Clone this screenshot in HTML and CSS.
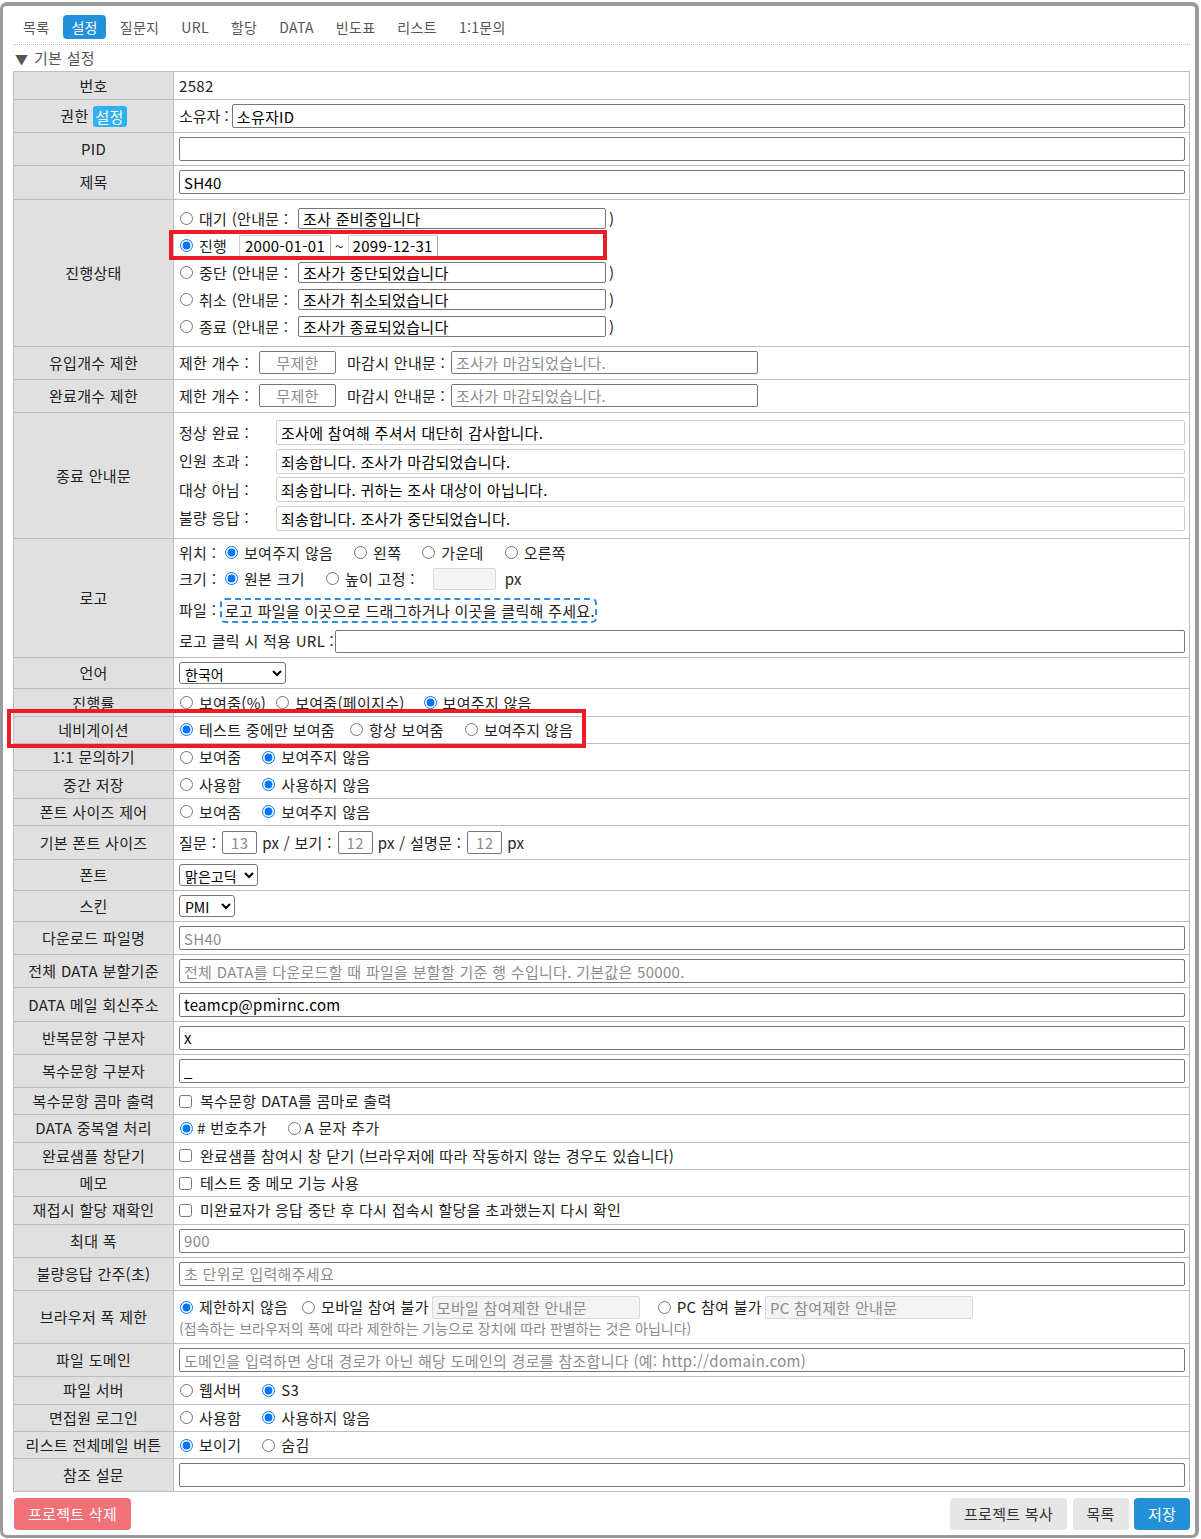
FILE: index.html
```html
<!DOCTYPE html>
<html lang="ko">
<head>
<meta charset="utf-8">
<title>설정</title>
<link rel="stylesheet" href="styles.css">
</head>
<body>
<div class="frame">
  <nav class="tabs">
    <a class="tab" href="#">목록</a>
    <a class="tab active" href="#">설정</a>
    <a class="tab" href="#">질문지</a>
    <a class="tab" href="#">URL</a>
    <a class="tab" href="#">할당</a>
    <a class="tab" href="#">DATA</a>
    <a class="tab" href="#">빈도표</a>
    <a class="tab" href="#">리스트</a>
    <a class="tab" href="#">1:1문의</a>
  </nav>
  <div class="section-title"><span class="tri">▼</span>기본 설정</div>

  <div class="sheet">
    <div class="row r-num"><div class="th">번호</div><div class="td">2582</div></div>
    <div class="row in"><div class="th">권한 <span class="badge">설정</span></div><div class="td"><span class="owner-label">소유자 :</span><input class="inp full owner" value="소유자ID"></div></div>
    <div class="row in"><div class="th">PID</div><div class="td"><input class="inp full"></div></div>
    <div class="row in"><div class="th">제목</div><div class="td"><input class="inp full" value="SH40"></div></div>

    <div class="row r-status"><div class="th">진행상태</div><div class="td col status-list">
      <div class="st-line"><label class="st-lab"><input type="radio" name="st">대기 (안내문 :</label><input class="inp st-msg" value="조사 준비중입니다"><span class="paren">)</span></div>
      <div class="st-line"><label class="st-lab st-short"><input type="radio" name="st" checked>진행</label><input class="date" value="2000-01-01"><span class="tilde">~</span><input class="date d2" value="2099-12-31"></div>
      <div class="st-line"><label class="st-lab"><input type="radio" name="st">중단 (안내문 :</label><input class="inp st-msg" value="조사가 중단되었습니다"><span class="paren">)</span></div>
      <div class="st-line"><label class="st-lab"><input type="radio" name="st">취소 (안내문 :</label><input class="inp st-msg" value="조사가 취소되었습니다"><span class="paren">)</span></div>
      <div class="st-line"><label class="st-lab"><input type="radio" name="st">종료 (안내문 :</label><input class="inp st-msg" value="조사가 종료되었습니다"><span class="paren">)</span></div>
    </div></div>

    <div class="row in"><div class="th">유입개수 제한</div><div class="td"><span class="lim-label">제한 개수 :</span><input class="inp lim" placeholder="무제한"><span class="close-label">마감시 안내문 :</span><input class="inp lim-msg" placeholder="조사가 마감되었습니다."></div></div>
    <div class="row in"><div class="th">완료개수 제한</div><div class="td"><span class="lim-label">제한 개수 :</span><input class="inp lim" placeholder="무제한"><span class="close-label">마감시 안내문 :</span><input class="inp lim-msg" placeholder="조사가 마감되었습니다."></div></div>

    <div class="row r-end"><div class="th">종료 안내문</div><div class="td col end-list">
      <div class="end-line"><span class="end-label">정상 완료 :</span><input class="inp end-inp" value="조사에 참여해 주셔서 대단히 감사합니다."></div>
      <div class="end-line"><span class="end-label">인원 초과 :</span><input class="inp end-inp" value="죄송합니다. 조사가 마감되었습니다."></div>
      <div class="end-line"><span class="end-label">대상 아님 :</span><input class="inp end-inp" value="죄송합니다. 귀하는 조사 대상이 아닙니다."></div>
      <div class="end-line"><span class="end-label">불량 응답 :</span><input class="inp end-inp" value="죄송합니다. 조사가 중단되었습니다."></div>
    </div></div>

    <div class="row r-logo"><div class="th">로고</div><div class="td col logo-list">
      <div class="logo-line l-pos"><span class="logo-label">위치 :</span>
        <label class="opt"><input type="radio" name="lpos" checked>보여주지 않음</label>
        <label class="opt"><input type="radio" name="lpos">왼쪽</label>
        <label class="opt"><input type="radio" name="lpos">가운데</label>
        <label class="opt"><input type="radio" name="lpos">오른쪽</label>
      </div>
      <div class="logo-line l-size"><span class="logo-label">크기 :</span>
        <label class="opt"><input type="radio" name="lsize" checked>원본 크기</label>
        <label class="opt opt-tight"><input type="radio" name="lsize">높이 고정 :</label>
        <input class="inp off logo-h" disabled><span class="px-unit">px</span>
      </div>
      <div class="logo-line l-file"><span class="file-label">파일 :</span><div class="dropzone">로고 파일을 이곳으로 드래그하거나 이곳을 클릭해 주세요.</div></div>
      <div class="logo-line l-url"><span class="url-label">로고 클릭 시 적용 URL :</span><input class="inp full url-inp"></div>
    </div></div>

    <div class="row r-sel"><div class="th">언어</div><div class="td"><select class="sel sel-lang"><option>한국어</option></select></div></div>

    <div class="row"><div class="th">진행률</div><div class="td">
      <label class="opt opt-pct"><input type="radio" name="prog">보여줌(%)</label>
      <label class="opt opt-page"><input type="radio" name="prog">보여줌(페이지수)</label>
      <label class="opt"><input type="radio" name="prog" checked>보여주지 않음</label>
    </div></div>
    <div class="row"><div class="th">네비게이션</div><div class="td">
      <label class="opt opt-s"><input type="radio" name="nav" checked>테스트 중에만 보여줌</label>
      <label class="opt"><input type="radio" name="nav">항상 보여줌</label>
      <label class="opt"><input type="radio" name="nav">보여주지 않음</label>
    </div></div>
    <div class="row"><div class="th">1:1 문의하기</div><div class="td">
      <label class="opt"><input type="radio" name="qna">보여줌</label>
      <label class="opt"><input type="radio" name="qna" checked>보여주지 않음</label>
    </div></div>
    <div class="row"><div class="th">중간 저장</div><div class="td">
      <label class="opt"><input type="radio" name="save">사용함</label>
      <label class="opt"><input type="radio" name="save" checked>사용하지 않음</label>
    </div></div>
    <div class="row"><div class="th">폰트 사이즈 제어</div><div class="td">
      <label class="opt"><input type="radio" name="fsc">보여줌</label>
      <label class="opt"><input type="radio" name="fsc" checked>보여주지 않음</label>
    </div></div>

    <div class="row r-fs"><div class="th">기본 폰트 사이즈</div><div class="td">
      <span>질문 :</span><input class="inp fs" placeholder="13"><span>px / 보기 :</span><input class="inp fs" placeholder="12"><span>px / 설명문 :</span><input class="inp fs" placeholder="12"><span>px</span>
    </div></div>

    <div class="row r-sel"><div class="th">폰트</div><div class="td"><select class="sel sel-font"><option>맑은고딕</option></select></div></div>
    <div class="row r-sel"><div class="th">스킨</div><div class="td"><select class="sel sel-skin"><option>PMI</option></select></div></div>

    <div class="row in"><div class="th">다운로드 파일명</div><div class="td"><input class="inp full" placeholder="SH40"></div></div>
    <div class="row in"><div class="th">전체 DATA 분할기준</div><div class="td"><input class="inp full" placeholder="전체 DATA를 다운로드할 때 파일을 분할할 기준 행 수입니다. 기본값은 50000."></div></div>
    <div class="row in"><div class="th">DATA 메일 회신주소</div><div class="td"><input class="inp full" value="teamcp@pmirnc.com"></div></div>
    <div class="row in"><div class="th">반복문항 구분자</div><div class="td"><input class="inp full" value="x"></div></div>
    <div class="row in"><div class="th">복수문항 구분자</div><div class="td"><input class="inp full" value="_"></div></div>

    <div class="row"><div class="th">복수문항 콤마 출력</div><div class="td"><label class="chk"><input type="checkbox">복수문항 DATA를 콤마로 출력</label></div></div>
    <div class="row"><div class="th">DATA 중복열 처리</div><div class="td">
      <label class="opt opt-near"><input type="radio" name="dup" checked># 번호추가</label>
      <label class="opt opt-near"><input type="radio" name="dup">A 문자 추가</label>
    </div></div>
    <div class="row"><div class="th">완료샘플 창닫기</div><div class="td"><label class="chk"><input type="checkbox">완료샘플 참여시 창 닫기 (브라우저에 따라 작동하지 않는 경우도 있습니다)</label></div></div>
    <div class="row"><div class="th">메모</div><div class="td"><label class="chk"><input type="checkbox">테스트 중 메모 기능 사용</label></div></div>
    <div class="row"><div class="th">재접시 할당 재확인</div><div class="td"><label class="chk"><input type="checkbox">미완료자가 응답 중단 후 다시 접속시 할당을 초과했는지 다시 확인</label></div></div>

    <div class="row in"><div class="th">최대 폭</div><div class="td"><input class="inp full" placeholder="900"></div></div>
    <div class="row in"><div class="th">불량응답 간주(초)</div><div class="td"><input class="inp full" placeholder="초 단위로 입력해주세요"></div></div>

    <div class="row r-bw"><div class="th">브라우저 폭 제한</div><div class="td col bw-list">
      <div class="bw-line">
        <label class="opt opt-bw"><input type="radio" name="bw" checked>제한하지 않음</label>
        <label class="opt opt-bw2"><input type="radio" name="bw">모바일 참여 불가</label>
        <input class="inp off bw-inp" placeholder="모바일 참여제한 안내문" disabled>
        <label class="opt opt-bw2"><input type="radio" name="bw">PC 참여 불가</label>
        <input class="inp off bw-inp" placeholder="PC 참여제한 안내문" disabled>
      </div>
      <div class="bw-note">(접속하는 브라우저의 폭에 따라 제한하는 기능으로 장치에 따라 판별하는 것은 아닙니다)</div>
    </div></div>

    <div class="row in"><div class="th">파일 도메인</div><div class="td"><input class="inp full" placeholder="도메인을 입력하면 상대 경로가 아닌 해당 도메인의 경로를 참조합니다 (예: http://domain.com)"></div></div>

    <div class="row"><div class="th">파일 서버</div><div class="td">
      <label class="opt"><input type="radio" name="fsv">웹서버</label>
      <label class="opt"><input type="radio" name="fsv" checked>S3</label>
    </div></div>
    <div class="row"><div class="th">면접원 로그인</div><div class="td">
      <label class="opt"><input type="radio" name="itv">사용함</label>
      <label class="opt"><input type="radio" name="itv" checked>사용하지 않음</label>
    </div></div>
    <div class="row"><div class="th">리스트 전체메일 버튼</div><div class="td">
      <label class="opt"><input type="radio" name="mail" checked>보이기</label>
      <label class="opt"><input type="radio" name="mail">숨김</label>
    </div></div>
    <div class="row in"><div class="th">참조 설문</div><div class="td"><input class="inp full"></div></div>
  </div>

  <div class="actions">
    <button class="btn btn-del" type="button">프로젝트 삭제</button>
    <div class="actions-right">
      <button class="btn btn-gray btn-wide" type="button">프로젝트 복사</button>
      <button class="btn btn-gray" type="button">목록</button>
      <button class="btn btn-blue" type="button">저장</button>
    </div>
  </div>
</div>

<div class="mark mark-a"></div>
<div class="mark mark-b"></div>
</body>
</html>
```

FILE: styles.css
```css
* { box-sizing: border-box; }

html, body {
  margin: 0;
  padding: 0;
  background: #fff;
}

body {
  font-family: "Noto Sans CJK KR", sans-serif;
  font-size: 15px;
  letter-spacing: 0.3px;
  line-height: 20px;
  color: #222;
}

input, select, button {
  font: inherit;
  letter-spacing: inherit;
  color: #000;
}

/* outer window frame */
.frame {
  margin: 2px 2px 0 0;
  border-style: solid;
  border-color: #9b9b9b;
  border-width: 4px 4px 3px 3px;
  border-radius: 7px;
  padding: 9px 5px 5px 10px;
}

/* tabs */
.tabs {
  display: flex;
  gap: 6px;
  padding: 0 0 5px 2px;
  border-bottom: 1px dotted #bbb;
}

.tab {
  height: 24px;
  line-height: 24px;
  padding: 0 8px;
  border-radius: 4px;
  font-size: 14px;
  color: #555;
  text-decoration: none;
}

.tab.active {
  background: #2391da;
  color: #fff;
}

.section-title {
  height: 26px;
  line-height: 26px;
  padding-left: 2px;
  color: #555;
}

.tri {
  display: inline-block;
  width: 19px;
  font-size: 13px;
}

/* settings sheet */
.sheet {
  border: 1px solid #bdbdbd;
  border-bottom: none;
}

.row {
  display: flex;
  height: 27.35px;
  border-bottom: 1px solid #bdbdbd;
}

.row.in { height: 33.18px; }
.row.r-num { height: 28px; }
.row.r-status { height: 147px; }
.row.r-end { height: 126.5px; }
.row.r-logo { height: 119px; }
.row.r-sel { height: 31px; }
.row.r-fs { height: 34px; }
.row.r-bw { height: 53px; }

.th {
  flex: none;
  width: 160px;
  background: #e0e0e0;
  border-right: 1px solid #bdbdbd;
  display: flex;
  align-items: center;
  justify-content: center;
  color: #222;
}

.td {
  flex: 1;
  min-width: 0;
  display: flex;
  align-items: center;
  padding: 0 4px 0 5px;
  white-space: nowrap;
}

.td.col {
  flex-direction: column;
  align-items: stretch;
}

.badge {
  display: inline-block;
  margin-left: 4px;
  padding: 0 3px;
  height: 21px;
  line-height: 21px;
  border-radius: 3px;
  background: #30b2f0;
  color: #fff;
}

/* inputs */
.inp {
  height: 24px;
  padding: 0 4px;
  border: 1px solid #767676;
  border-radius: 2px;
  background: #fff;
  outline: none;
}

.inp::placeholder { color: #8c8c8c; }

.inp.full {
  flex: 1;
  min-width: 0;
}

.owner-label { letter-spacing: 0; }

.inp.owner { margin-left: 3px; }

.inp.off {
  background: #f3f3f3;
  border-color: #d9d9d9;
}

input[type="radio"],
input[type="checkbox"] {
  flex: none;
  width: 13px;
  height: 13px;
  margin: 0 6px 0 1px;
}

.opt {
  display: inline-flex;
  align-items: center;
  margin-right: 20px;
}

.opt-s { margin-right: 14px; }
.opt-pct { margin-right: 9px; }
.opt-page { margin-right: 18px; }

.opt-near input[type="radio"] { margin-right: 4px; }

.chk {
  display: inline-flex;
  align-items: center;
}

.chk input[type="checkbox"] { margin: 0 8px 0 0; }

/* status */
.status-list { justify-content: center; }

.st-line {
  display: flex;
  align-items: center;
  height: 27px;
}

.st-lab {
  display: inline-flex;
  align-items: center;
  width: 119px;
  flex: none;
}

.st-short { width: 60px; }

.st-msg {
  width: 308px;
  height: 21px;
}

.paren { margin-left: 3px; }

.date {
  width: 92px;
  height: 22px;
  border: 1px solid #cfcfcf;
  border-right-color: #a8a8a8;
  border-bottom-color: #a8a8a8;
  border-radius: 1px;
  text-align: center;
  padding: 0;
  outline: none;
}

.date.d2 { width: 90px; }

.tilde { margin: 0 4px; }

/* limits */
.lim-label {
  width: 80px;
  flex: none;
}

.close-label {
  width: 104px;
  flex: none;
  margin-left: 11px;
}

.lim {
  width: 77px;
  height: 23px;
  text-align: center;
}

.lim-msg {
  width: 307px;
  height: 23px;
}

/* end messages */
.end-list {
  justify-content: center;
  gap: 3.5px;
}

.end-line {
  display: flex;
  align-items: center;
  height: 25px;
}

.end-label {
  width: 97px;
  flex: none;
}

.end-inp {
  flex: 1;
  min-width: 0;
  height: 25px;
  border-color: #cdcdcd;
}

/* logo */
.logo-list { padding-top: 2.5px; }

.logo-line {
  display: flex;
  align-items: center;
}

.l-pos { height: 22px; }
.l-size { height: 22px; margin-top: 4px; }
.l-file { height: 25px; margin-top: 8px; }
.l-url { height: 23px; margin-top: 7px; }

.logo-label {
  width: 45px;
  flex: none;
}

.opt-tight { margin-right: 0; }

.logo-h {
  width: 63px;
  height: 22px;
  margin-left: 18px;
}

.px-unit { margin-left: 9px; }

.file-label {
  width: 41px;
  flex: none;
}

.dropzone {
  width: 377px;
  height: 25px;
  line-height: 21px;
  padding: 0 3px;
  border: 2px dashed #2a8ee6;
  border-radius: 5px;
  overflow: hidden;
}

.url-label {
  width: 156px;
  flex: none;
}

.url-inp { height: 23px; }

/* selects */
.sel {
  height: 22px;
  padding: 0 0 0 1px;
  border: 1px solid #767676;
  border-radius: 3px;
  background: #fff;
  font-size: 14px;
  letter-spacing: 0;
}

.sel-lang { width: 107px; }
.sel-font { width: 79px; }
.sel-skin { width: 56px; }

/* font sizes */
.fs {
  width: 35px;
  height: 23px;
  margin: 0 5px 0 6px;
  text-align: center;
}

/* browser width */
.bw-list { padding-top: 4.5px; }

.bw-line {
  display: flex;
  align-items: center;
  height: 23px;
}

.opt-bw { margin-right: 13px; }
.opt-bw2 { margin-right: 3px; }

.bw-inp {
  width: 208px;
  height: 23px;
  margin-right: 17px;
}

.bw-note {
  font-size: 14px;
  letter-spacing: 0;
  line-height: 18px;
  color: #8a8a8a;
}

/* actions */
.actions {
  display: flex;
  justify-content: space-between;
  margin-top: 6px;
  padding-left: 1px;
}

.actions-right {
  display: flex;
  gap: 5.5px;
}

.btn {
  height: 32px;
  width: 56px;
  padding: 0;
  border: 0;
  border-radius: 4px;
  cursor: pointer;
}

.btn-del {
  width: 117px;
  background: #f07177;
  color: #fff;
}

.btn-wide { width: 117px; }

.btn-gray {
  background: #e6e6e6;
  color: #333;
}

.btn-blue {
  background: #2391da;
  color: #fff;
}

/* red annotation boxes drawn over the screenshot */
.mark {
  position: absolute;
  border: 4px solid #ec1c24;
  pointer-events: none;
}

.mark-a {
  left: 169px;
  top: 230px;
  width: 438px;
  height: 30px;
}

.mark-b {
  left: 7px;
  top: 709px;
  width: 579px;
  height: 39px;
}
```
